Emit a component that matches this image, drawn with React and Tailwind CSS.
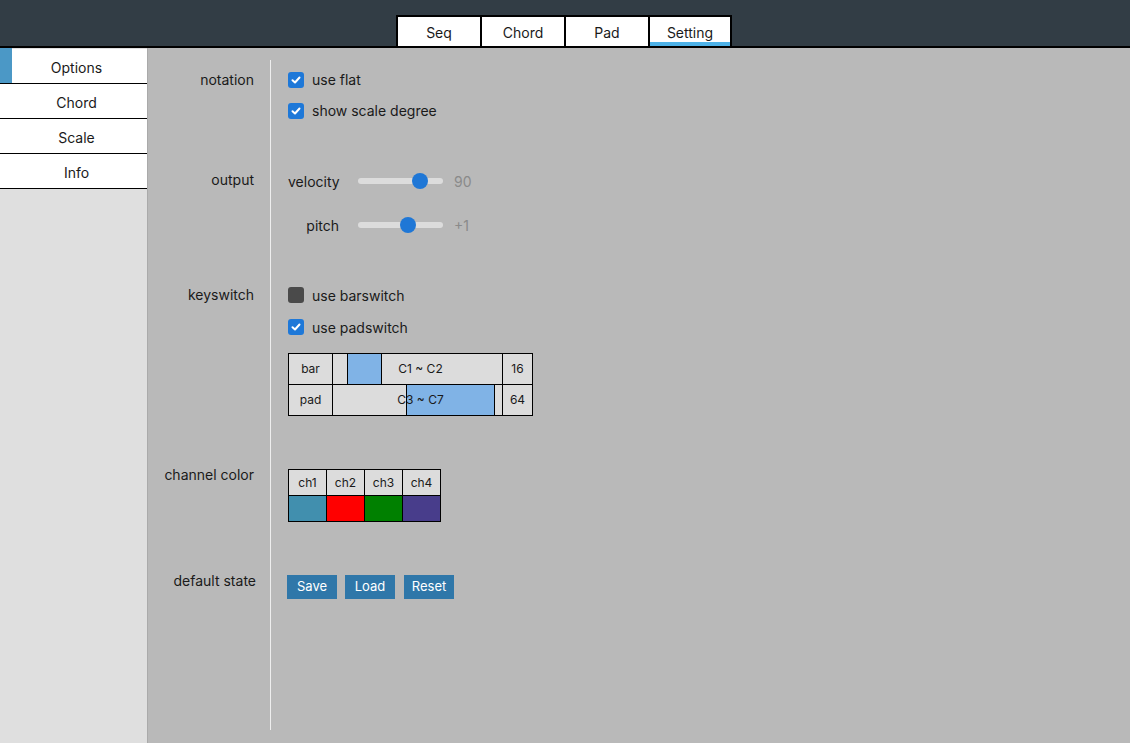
import React from "react";

function Check({ checked }) {
  if (!checked) {
    return <div className="w-[16px] h-[16px] rounded-[3px] bg-[#4a4a4a] shrink-0" />;
  }
  return (
    <div className="w-[16px] h-[16px] rounded-[3px] bg-[#1e78d8] flex items-center justify-center shrink-0">
      <svg width="12" height="12" viewBox="0 0 12 12">
        <path d="M2.5 6.2 L5 8.5 L9.5 3.5" fill="none" stroke="white" strokeWidth="2" strokeLinecap="round" strokeLinejoin="round" />
      </svg>
    </div>
  );
}

function CheckRow({ checked, label, h }) {
  return (
    <div className={`flex items-center ${h}`}>
      <Check checked={checked} />
      <span className="ml-[8px]">{label}</span>
    </div>
  );
}

function Slider({ label, left, value }) {
  return (
    <div className="flex items-center h-[44px]">
      <div className="w-[51px] text-right">{label}</div>
      <div className="ml-[19px] w-[85px] h-[6px] rounded-full bg-[#dcdcdc] relative">
        <div
          className="absolute w-[16px] h-[16px] rounded-full bg-[#1f77d6] top-1/2 -translate-y-1/2"
          style={{ left: left }}
        />
      </div>
      <div className="ml-[11px] text-[#8a8a8a]">{value}</div>
    </div>
  );
}

function RangeRow({ name, text, blueLeft, blueWidth, count }) {
  return (
    <div className="flex text-[12px]">
      <div className="w-[44px] h-[31px] border-r border-b border-black bg-[#dcdcdc] flex items-center justify-center">{name}</div>
      <div className="w-[170px] h-[31px] border-r border-b border-black bg-[#dcdcdc] relative flex items-center justify-center">
        <div
          className="absolute top-0 bottom-0 bg-[#80b3e6] border-x border-black"
          style={{ left: blueLeft, width: blueWidth }}
        />
        <span className="relative left-[3px]">{text}</span>
      </div>
      <div className="w-[30px] h-[31px] border-r border-b border-black bg-[#dcdcdc] flex items-center justify-center">{count}</div>
    </div>
  );
}

export default function App() {
  const tabs = ["Seq", "Chord", "Pad", "Setting"];
  const side = ["Options", "Chord", "Scale", "Info"];
  const chans = [
    ["ch1", "bg-[#418fae]"],
    ["ch2", "bg-[#ff0000]"],
    ["ch3", "bg-[#008000]"],
    ["ch4", "bg-[#483d8b]"],
  ];
  return (
    <div className="w-full h-[743px] flex flex-col overflow-hidden font-['Inter',sans-serif] text-[14px] text-[#1a1a1a]">
      <div className="h-[48px] shrink-0 bg-[#323d45] border-b-2 border-black flex justify-center items-end">
        <div className="flex -translate-x-[1px]">
          {tabs.map((t, i) => (
            <div
              key={t}
              className={`relative w-[84px] h-[31px] bg-white border-t-2 border-l-2 border-black flex items-center justify-center pt-[2px] ${i === tabs.length - 1 ? "border-r-2" : ""}`}
            >
              {t}
              {t === "Setting" && <div className="absolute left-0 right-0 bottom-0 h-[4px] bg-[#4db2e8]" />}
            </div>
          ))}
        </div>
      </div>
      <div className="flex flex-1">
        <div className="w-[147px] shrink-0 bg-[#dfdfdf] pt-[1px]">
          {side.map((s, i) => (
            <div key={s} className="relative h-[35px] bg-white border-b border-black flex items-center justify-center pl-[6px]">
              {i === 0 && <div className="absolute left-0 -top-[1px] bottom-0 w-[12px] bg-[#4b98c6]" />}
              <span className="relative top-[1px]">{s}</span>
            </div>
          ))}
        </div>
        <div className="flex-1 bg-[#b9b9b9] pt-[12px] border-l border-[#aaaaaa]">
          {/* notation */}
          <div className="flex">
            <div className="w-[122px] pr-[16px] text-right pt-[4px] leading-[31px]">notation</div>
            <div className="border-l border-[#eeeeee] pl-[17px] pt-[4px]">
              <CheckRow checked label="use flat" h="h-[31px]" />
              <CheckRow checked label="show scale degree" h="h-[31px]" />
            </div>
          </div>
          {/* output */}
          <div className="flex">
            <div className="w-[122px] pr-[16px] text-right pt-[33px] leading-[42px]">output</div>
            <div className="border-l border-[#eeeeee] pl-[17px] pt-[33px]">
              <Slider label="velocity" left={54} value="90" />
              <Slider label="pitch" left={42} value="+1" />
            </div>
          </div>
          {/* keyswitch */}
          <div className="flex">
            <div className="w-[122px] pr-[16px] text-right pt-[32px] leading-[32px]">keyswitch</div>
            <div className="border-l border-[#eeeeee] pl-[17px] pt-[32px]">
              <CheckRow checked={false} label="use barswitch" h="h-[32px]" />
              <CheckRow checked label="use padswitch" h="h-[32px]" />
              <div className="mt-[10px] w-[245px] border-l border-t border-black">
                <RangeRow name="bar" text="C1 ~ C2" blueLeft={14} blueWidth={35} count="16" />
                <RangeRow name="pad" text="C3 ~ C7" blueLeft={73} blueWidth={89} count="64" />
              </div>
            </div>
          </div>
          {/* channel color */}
          <div className="flex">
            <div className="w-[122px] pr-[16px] text-right pt-[49px] leading-[20px]">channel color</div>
            <div className="border-l border-[#eeeeee] pl-[17px] pt-[53px]">
              <div className="w-[153px] border-l border-t border-black text-[12px]">
                <div className="flex">
                  {chans.map(([c]) => (
                    <div key={c} className="w-[38px] h-[26px] border-r border-b border-black bg-[#dcdcdc] flex items-center justify-center">{c}</div>
                  ))}
                </div>
                <div className="flex">
                  {chans.map(([c, bg]) => (
                    <div key={c} className={`w-[38px] h-[26px] border-r border-b border-black ${bg}`} />
                  ))}
                </div>
              </div>
            </div>
          </div>
          {/* default state */}
          <div className="flex">
            <div className="w-[122px] pr-[14px] text-right pt-[49px] leading-[20px]">default state</div>
            <div className="border-l border-[#eeeeee] pl-[16px] pt-[53px] pb-[131px]">
              <div className="flex text-[13px] text-white">
                <div className="w-[50px] h-[24px] bg-[#2f77a9] flex items-center justify-center">Save</div>
                <div className="ml-[8px] w-[50px] h-[24px] bg-[#2f77a9] flex items-center justify-center">Load</div>
                <div className="ml-[9px] w-[50px] h-[24px] bg-[#2f77a9] flex items-center justify-center">Reset</div>
              </div>
            </div>
          </div>
        </div>
      </div>
    </div>
  );
}
